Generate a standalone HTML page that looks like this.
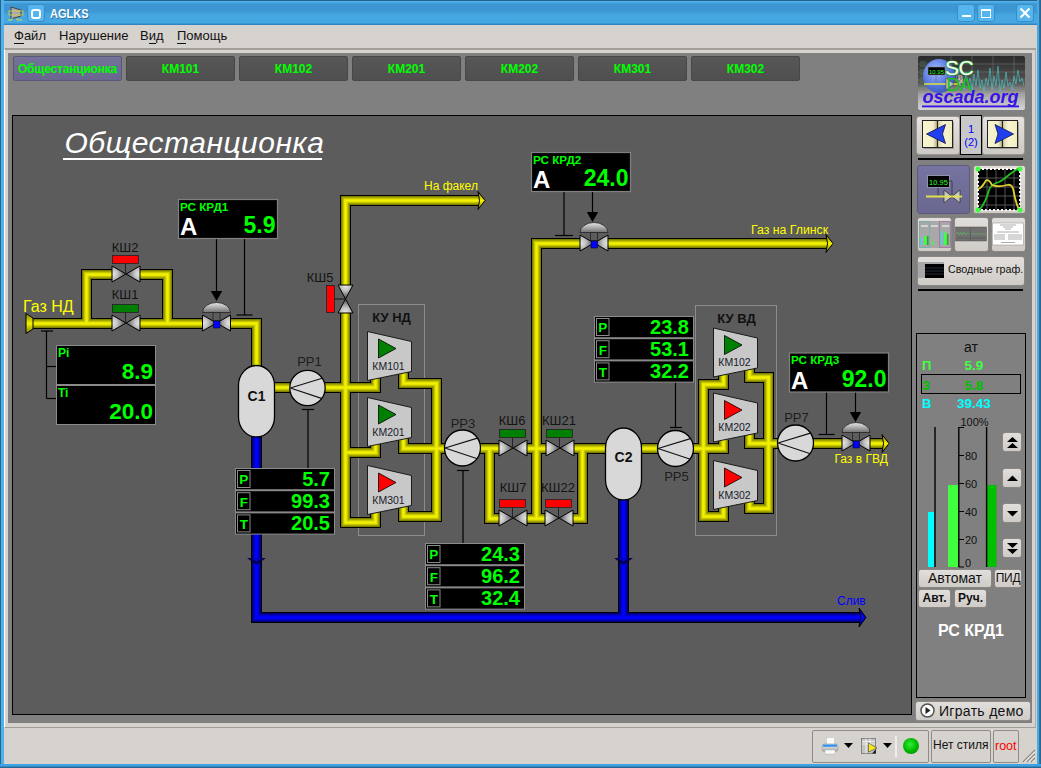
<!DOCTYPE html>
<html><head><meta charset="utf-8">
<style>
*{box-sizing:border-box}
html,body{margin:0;padding:0}
body{width:1041px;height:768px;position:relative;overflow:hidden;background:#d6d2ce;font-family:"Liberation Sans",sans-serif}
.a{position:absolute}
#tb{left:0;top:0;width:1041px;height:25px;background:linear-gradient(#24628c 0,#24628c 1px,#56b6ee 1px,#4eaee8 2px,#3e96d2 4px,#3d96d3 11px,#45a6e0 15px,#46a8e2 23px,#2f86c4 24px,#2f86c4 25px)}
#lb{left:0;top:0;width:4px;height:768px;background:#50b0ea;border-left:1px solid #24648e}
#rb{left:1037px;top:0px;width:4px;height:768px;background:linear-gradient(to right,#4aa8e4 0,#4aa8e4 2px,#2e72a0 2.5px,#22628c 4px)}
#bb{left:0;top:764px;width:1041px;height:4px;background:linear-gradient(#3ca4e4 0,#3ca4e4 2px,#2a6e9c 3px,#22628c 4px)}
.tbtn{top:4px;width:18px;height:18px;border:1px solid #3a8cc4;border-radius:3px;background:#55b5ee}
#menu{left:4px;top:25px;width:1033px;height:24px;background:#d6d2ce}
.mi{top:28px;font-size:13px;color:#111;line-height:15px}
.mi u{text-decoration:none;border-bottom:1px solid #111}
#ws{left:8px;top:53px;width:1024px;height:670px;background:#808080}
#frame{left:4px;top:48px;width:1032px;height:680px;border-top:2px solid #a29e9a;border-left:1px solid #fff;border-bottom:1px solid #a09c98;border-right:1px solid #b0aca8}
.tab{top:56px;width:109px;height:25px;border:1px solid #474747;border-radius:2px;background:linear-gradient(#575757,#4f4f4f);color:#00ff00;font-weight:bold;font-size:12px;text-align:center;line-height:24px}
#main{left:12px;top:115px;width:900px;height:600px;background:#5c5c5c;border:1px solid #000}
.sb{top:730px;height:33px;border:1px solid #8e8a86;border-radius:2px;background:#d6d2ce}
.btn{border:1px solid #8a8682;border-radius:3px;background:linear-gradient(#e2dedb,#cfcbc7)}
</style></head><body>
<div class="a" id="tb"></div>
<div class="a" id="lb"></div>
<div class="a" id="rb"></div>
<div class="a" id="bb"></div>
<!-- title bar contents -->
<svg class="a" style="left:8px;top:6px" width="16" height="15" viewBox="0 0 16 15">
 <polygon points="3,1 13,4 13,10 3,13" fill="#a8a8b0" stroke="#444" stroke-width="1"/>
 <rect x="1" y="5" width="14" height="4" fill="none" stroke="#d8d830" stroke-width="0.8"/>
 <path d="M0,14 H4 V12 M9,12 V14 H14" fill="none" stroke="#c8e040" stroke-width="1"/>
</svg>
<div class="a tbtn" style="left:27px"></div>
<div class="a" style="left:31px;top:9px;width:10px;height:10px;border:2.5px solid #fff;border-radius:3px"></div>
<div class="a" style="left:50px;top:6px;font-size:13px;font-weight:bold;color:#fff;line-height:15px;text-shadow:1px 1px 0 #2a70a0;transform:scaleX(0.85);transform-origin:0 0">AGLKS</div>
<div class="a tbtn" style="left:957px"></div>
<div class="a" style="left:962px;top:15px;width:9px;height:2px;background:#fff"></div>
<div class="a tbtn" style="left:977px"></div>
<div class="a" style="left:981px;top:9px;width:10px;height:9px;border:1.5px solid #fff;border-top-width:2.5px"></div>
<div class="a tbtn" style="left:1016px"></div>
<svg class="a" style="left:1016px;top:4px" width="18" height="18"><path d="M4.5,4.5 L13.5,13.5 M13.5,4.5 L4.5,13.5" stroke="#fff" stroke-width="2.2"/></svg>

<div class="a" id="menu"></div>
<div class="a mi" style="left:14px"><u>Ф</u>айл</div>
<div class="a mi" style="left:59px">Н<u>а</u>рушение</div>
<div class="a mi" style="left:140px">В<u>и</u>д</div>
<div class="a mi" style="left:177px"><u>П</u>омощь</div>

<div class="a" id="frame"></div>
<div class="a" id="ws"></div>

<div class="a tab" style="left:13px;background:linear-gradient(#74729a,#69678e);border-color:#5a5878;letter-spacing:-0.2px">Общестанционка</div>
<div class="a tab" style="left:126px">КМ101</div>
<div class="a tab" style="left:239px">КМ102</div>
<div class="a tab" style="left:352px">КМ201</div>
<div class="a tab" style="left:465px">КМ202</div>
<div class="a tab" style="left:578px">КМ301</div>
<div class="a tab" style="left:691px">КМ302</div>

<div class="a" id="main"></div>

<svg class="a" style="left:0;top:0" width="1041" height="768" viewBox="0 0 1041 768" font-family='"Liberation Sans",sans-serif'>
<defs>
<linearGradient id="gv" x1="0" y1="0" x2="0" y2="1"><stop offset="0" stop-color="#484848"/><stop offset="0.5" stop-color="#f0f0f0"/><stop offset="1" stop-color="#484848"/></linearGradient>
<linearGradient id="gh" x1="0" y1="0" x2="1" y2="0"><stop offset="0" stop-color="#484848"/><stop offset="0.5" stop-color="#f0f0f0"/><stop offset="1" stop-color="#484848"/></linearGradient>
<radialGradient id="gvl" cx="0.1" cy="0.5" r="0.95" fx="0.1" fy="0.5"><stop offset="0" stop-color="#e4e4e4"/><stop offset="0.3" stop-color="#c4c4c4"/><stop offset="0.7" stop-color="#787878"/><stop offset="1" stop-color="#505050"/></radialGradient>
<radialGradient id="gvr" cx="0.9" cy="0.5" r="0.95" fx="0.9" fy="0.5"><stop offset="0" stop-color="#e4e4e4"/><stop offset="0.3" stop-color="#c4c4c4"/><stop offset="0.7" stop-color="#787878"/><stop offset="1" stop-color="#505050"/></radialGradient>
<radialGradient id="gvt" cx="0.5" cy="0.1" r="0.95" fx="0.5" fy="0.1"><stop offset="0" stop-color="#e4e4e4"/><stop offset="0.3" stop-color="#c4c4c4"/><stop offset="0.7" stop-color="#787878"/><stop offset="1" stop-color="#505050"/></radialGradient>
<radialGradient id="gvb" cx="0.5" cy="0.9" r="0.95" fx="0.5" fy="0.9"><stop offset="0" stop-color="#e4e4e4"/><stop offset="0.3" stop-color="#c4c4c4"/><stop offset="0.7" stop-color="#787878"/><stop offset="1" stop-color="#505050"/></radialGradient>
<linearGradient id="gd" x1="0" y1="0" x2="0" y2="1"><stop offset="0" stop-color="#e8e8e8"/><stop offset="1" stop-color="#707070"/></linearGradient>
<linearGradient id="gy" x1="0" y1="0" x2="0" y2="1"><stop offset="0" stop-color="#808000"/><stop offset="0.5" stop-color="#f4f400"/><stop offset="1" stop-color="#808000"/></linearGradient>
<linearGradient id="gb" x1="0" y1="0" x2="0" y2="1"><stop offset="0" stop-color="#000080"/><stop offset="0.5" stop-color="#0000ff"/><stop offset="1" stop-color="#000080"/></linearGradient>
</defs>
<text x="64.5" y="153" font-size="30" font-style="italic" fill="#fff" letter-spacing="0.5">Общестанционка</text>
<rect x="63" y="158" width="259" height="2" fill="#fff"/>
<rect x="358.5" y="304.5" width="66" height="231" fill="none" stroke="#8c8c8c" stroke-width="1"/>
<rect x="695.5" y="305.5" width="81" height="230" fill="none" stroke="#8c8c8c" stroke-width="1"/>
<text x="391.5" y="322" font-size="13" font-weight="bold" fill="#111" text-anchor="middle">КУ НД</text>
<text x="736.5" y="323" font-size="13" font-weight="bold" fill="#111" text-anchor="middle">КУ ВД</text>
<path d="M30 323.5 H256.5 V367 M86.5 323.5 V274.5 H167.5 V323.5 M273 387.5 H375.5 V378 M479 200.5 H345.5 V522.5 H375.5 V511 M345.5 452.5 H375.5 V444 M403.5 370 V383.5 H436.5 V516.5 H403.5 V504 M403.5 435 V448.5 H436.5 M436.5 448.5 H607 M489.5 448.5 V518.5 H582.5 V448.5 M827 243.5 H536.5 V518.5 M640 448.5 H723.5 V440 M723.5 375 V384.5 H703.5 V516.5 H723.5 V507 M749.5 366 V377.5 H768.5 V508.5 H749.5 V499 M749.5 432 V443.5 H768.5 M768.5 443.5 H883" fill="none" stroke="#000" stroke-width="11" stroke-linejoin="miter" stroke-miterlimit="4"/>
<path d="M30 323.5 H256.5 V367 M86.5 323.5 V274.5 H167.5 V323.5 M273 387.5 H375.5 V378 M479 200.5 H345.5 V522.5 H375.5 V511 M345.5 452.5 H375.5 V444 M403.5 370 V383.5 H436.5 V516.5 H403.5 V504 M403.5 435 V448.5 H436.5 M436.5 448.5 H607 M489.5 448.5 V518.5 H582.5 V448.5 M827 243.5 H536.5 V518.5 M640 448.5 H723.5 V440 M723.5 375 V384.5 H703.5 V516.5 H723.5 V507 M749.5 366 V377.5 H768.5 V508.5 H749.5 V499 M749.5 432 V443.5 H768.5 M768.5 443.5 H883" fill="none" stroke="#787800" stroke-width="9" stroke-linejoin="miter" stroke-miterlimit="4"/>
<path d="M30 323.5 H256.5 V367 M86.5 323.5 V274.5 H167.5 V323.5 M273 387.5 H375.5 V378 M479 200.5 H345.5 V522.5 H375.5 V511 M345.5 452.5 H375.5 V444 M403.5 370 V383.5 H436.5 V516.5 H403.5 V504 M403.5 435 V448.5 H436.5 M436.5 448.5 H607 M489.5 448.5 V518.5 H582.5 V448.5 M827 243.5 H536.5 V518.5 M640 448.5 H723.5 V440 M723.5 375 V384.5 H703.5 V516.5 H723.5 V507 M749.5 366 V377.5 H768.5 V508.5 H749.5 V499 M749.5 432 V443.5 H768.5 M768.5 443.5 H883" fill="none" stroke="#949400" stroke-width="7.5" stroke-linejoin="miter" stroke-miterlimit="4"/>
<path d="M30 323.5 H256.5 V367 M86.5 323.5 V274.5 H167.5 V323.5 M273 387.5 H375.5 V378 M479 200.5 H345.5 V522.5 H375.5 V511 M345.5 452.5 H375.5 V444 M403.5 370 V383.5 H436.5 V516.5 H403.5 V504 M403.5 435 V448.5 H436.5 M436.5 448.5 H607 M489.5 448.5 V518.5 H582.5 V448.5 M827 243.5 H536.5 V518.5 M640 448.5 H723.5 V440 M723.5 375 V384.5 H703.5 V516.5 H723.5 V507 M749.5 366 V377.5 H768.5 V508.5 H749.5 V499 M749.5 432 V443.5 H768.5 M768.5 443.5 H883" fill="none" stroke="#b0b000" stroke-width="6" stroke-linejoin="miter" stroke-miterlimit="4"/>
<path d="M30 323.5 H256.5 V367 M86.5 323.5 V274.5 H167.5 V323.5 M273 387.5 H375.5 V378 M479 200.5 H345.5 V522.5 H375.5 V511 M345.5 452.5 H375.5 V444 M403.5 370 V383.5 H436.5 V516.5 H403.5 V504 M403.5 435 V448.5 H436.5 M436.5 448.5 H607 M489.5 448.5 V518.5 H582.5 V448.5 M827 243.5 H536.5 V518.5 M640 448.5 H723.5 V440 M723.5 375 V384.5 H703.5 V516.5 H723.5 V507 M749.5 366 V377.5 H768.5 V508.5 H749.5 V499 M749.5 432 V443.5 H768.5 M768.5 443.5 H883" fill="none" stroke="#cccc00" stroke-width="4.5" stroke-linejoin="miter" stroke-miterlimit="4"/>
<path d="M30 323.5 H256.5 V367 M86.5 323.5 V274.5 H167.5 V323.5 M273 387.5 H375.5 V378 M479 200.5 H345.5 V522.5 H375.5 V511 M345.5 452.5 H375.5 V444 M403.5 370 V383.5 H436.5 V516.5 H403.5 V504 M403.5 435 V448.5 H436.5 M436.5 448.5 H607 M489.5 448.5 V518.5 H582.5 V448.5 M827 243.5 H536.5 V518.5 M640 448.5 H723.5 V440 M723.5 375 V384.5 H703.5 V516.5 H723.5 V507 M749.5 366 V377.5 H768.5 V508.5 H749.5 V499 M749.5 432 V443.5 H768.5 M768.5 443.5 H883" fill="none" stroke="#e2e200" stroke-width="3" stroke-linejoin="miter" stroke-miterlimit="4"/>
<path d="M30 323.5 H256.5 V367 M86.5 323.5 V274.5 H167.5 V323.5 M273 387.5 H375.5 V378 M479 200.5 H345.5 V522.5 H375.5 V511 M345.5 452.5 H375.5 V444 M403.5 370 V383.5 H436.5 V516.5 H403.5 V504 M403.5 435 V448.5 H436.5 M436.5 448.5 H607 M489.5 448.5 V518.5 H582.5 V448.5 M827 243.5 H536.5 V518.5 M640 448.5 H723.5 V440 M723.5 375 V384.5 H703.5 V516.5 H723.5 V507 M749.5 366 V377.5 H768.5 V508.5 H749.5 V499 M749.5 432 V443.5 H768.5 M768.5 443.5 H883" fill="none" stroke="#f2f200" stroke-width="1.5" stroke-linejoin="miter" stroke-miterlimit="4"/>
<path d="M256.5 436 V617.5 H860 M623.5 499 V617.5" fill="none" stroke="#000" stroke-width="11" stroke-linejoin="miter" stroke-miterlimit="4"/>
<path d="M256.5 436 V617.5 H860 M623.5 499 V617.5" fill="none" stroke="#000070" stroke-width="9" stroke-linejoin="miter" stroke-miterlimit="4"/>
<path d="M256.5 436 V617.5 H860 M623.5 499 V617.5" fill="none" stroke="#000098" stroke-width="7.5" stroke-linejoin="miter" stroke-miterlimit="4"/>
<path d="M256.5 436 V617.5 H860 M623.5 499 V617.5" fill="none" stroke="#0000b8" stroke-width="6" stroke-linejoin="miter" stroke-miterlimit="4"/>
<path d="M256.5 436 V617.5 H860 M623.5 499 V617.5" fill="none" stroke="#0000d4" stroke-width="4.5" stroke-linejoin="miter" stroke-miterlimit="4"/>
<path d="M256.5 436 V617.5 H860 M623.5 499 V617.5" fill="none" stroke="#0000ee" stroke-width="3" stroke-linejoin="miter" stroke-miterlimit="4"/>
<path d="M256.5 436 V617.5 H860 M623.5 499 V617.5" fill="none" stroke="#0000ff" stroke-width="1.5" stroke-linejoin="miter" stroke-miterlimit="4"/>
<polygon points="478,191.5 485,200.5 478,209.5 479.5,200.5" fill="url(#gy)" stroke="#000" stroke-width="1"/>
<polygon points="826,234.5 833,243.5 826,252.5 827.5,243.5" fill="url(#gy)" stroke="#000" stroke-width="1"/>
<polygon points="882,434.5 889,443.5 882,452.5 883.5,443.5" fill="url(#gy)" stroke="#000" stroke-width="1"/>
<polygon points="859,608.0 866,617.5 859,627.0 860.5,617.5" fill="url(#gb)" stroke="#000" stroke-width="1"/>
<polygon points="26,313.5 33,318 33,329 26,333.5" fill="url(#gy)" stroke="#000" stroke-width="1"/>
<path d="M247.0,558 L266.0,558 L256.5,565 Z" fill="#000040" opacity="0.9"/>
<path d="M251.5,558 L261.5,558 L256.5,562 Z" fill="#0000cc"/>
<path d="M614.0,558 L633.0,558 L623.5,565 Z" fill="#000040" opacity="0.9"/>
<path d="M618.5,558 L628.5,558 L623.5,562 Z" fill="#0000cc"/>
<rect x="238.5" y="365.5" width="36.0" height="71.5" rx="18.0" ry="20.0" fill="#d8d8d8" stroke="#000" stroke-width="1.3"/>
<text x="256.5" y="400.5" font-size="14" font-weight="bold" fill="#111" text-anchor="middle">С1</text>
<rect x="605.5" y="428" width="36.0" height="72" rx="18.0" ry="20.0" fill="#d8d8d8" stroke="#000" stroke-width="1.3"/>
<text x="623.5" y="461.5" font-size="14" font-weight="bold" fill="#111" text-anchor="middle">С2</text>
<circle cx="307.5" cy="388" r="17.7" fill="#d8d8d8" stroke="#000" stroke-width="1.3"/>
<path d="M290.3,388 L322.191,378.265 M290.3,388 L322.191,398.62" stroke="#111" stroke-width="1.1"/>
<circle cx="462.5" cy="448" r="18" fill="#d8d8d8" stroke="#000" stroke-width="1.3"/>
<path d="M445.0,448 L477.44,438.1 M445.0,448 L477.44,458.8" stroke="#111" stroke-width="1.1"/>
<circle cx="675.5" cy="448.5" r="18" fill="#d8d8d8" stroke="#000" stroke-width="1.3"/>
<path d="M658.0,448.5 L690.44,438.6 M658.0,448.5 L690.44,459.3" stroke="#111" stroke-width="1.1"/>
<circle cx="795.5" cy="443" r="18" fill="#d8d8d8" stroke="#000" stroke-width="1.3"/>
<path d="M778.0,443 L810.44,433.1 M778.0,443 L810.44,453.8" stroke="#111" stroke-width="1.1"/>
<polygon points="367.5,331.5 411.5,341.5 411.5,371.5 367.5,380.5" fill="#c8c8c8" stroke="#1a1a1a" stroke-width="1"/>
<polygon points="378.5,339.0 396.0,348.5 378.5,358.0" fill="#008000" stroke="#000" stroke-width="0.8"/>
<text x="388.5" y="369.8" font-size="10.5" fill="#1a1a2a" text-anchor="middle">КМ101</text>
<polygon points="367.5,397.5 411.5,407.5 411.5,437.5 367.5,446.5" fill="#c8c8c8" stroke="#1a1a1a" stroke-width="1"/>
<polygon points="378.5,405.0 396.0,414.5 378.5,424.0" fill="#008000" stroke="#000" stroke-width="0.8"/>
<text x="388.5" y="435.8" font-size="10.5" fill="#1a1a2a" text-anchor="middle">КМ201</text>
<polygon points="367.5,465.5 411.5,475.5 411.5,505.5 367.5,514.5" fill="#c8c8c8" stroke="#1a1a1a" stroke-width="1"/>
<polygon points="378.5,473.0 396.0,482.5 378.5,492.0" fill="#ff0000" stroke="#000" stroke-width="0.8"/>
<text x="388.5" y="503.8" font-size="10.5" fill="#1a1a2a" text-anchor="middle">КМ301</text>
<polygon points="713.5,328 757.5,338 757.5,368 713.5,377" fill="#c8c8c8" stroke="#1a1a1a" stroke-width="1"/>
<polygon points="724.5,335.5 742.0,345 724.5,354.5" fill="#008000" stroke="#000" stroke-width="0.8"/>
<text x="734.5" y="366.3" font-size="10.5" fill="#1a1a2a" text-anchor="middle">КМ102</text>
<polygon points="713.5,393 757.5,403 757.5,433 713.5,442" fill="#c8c8c8" stroke="#1a1a1a" stroke-width="1"/>
<polygon points="724.5,400.5 742.0,410 724.5,419.5" fill="#ff0000" stroke="#000" stroke-width="0.8"/>
<text x="734.5" y="431.3" font-size="10.5" fill="#1a1a2a" text-anchor="middle">КМ202</text>
<polygon points="713.5,460.5 757.5,470.5 757.5,500.5 713.5,509.5" fill="#c8c8c8" stroke="#1a1a1a" stroke-width="1"/>
<polygon points="724.5,468.0 742.0,477.5 724.5,487.0" fill="#ff0000" stroke="#000" stroke-width="0.8"/>
<text x="734.5" y="498.8" font-size="10.5" fill="#1a1a2a" text-anchor="middle">КМ302</text>
<rect x="113" y="268" width="26" height="12" fill="#5c5c5c"/>
<polygon points="112,266 126,274 112,282" fill="url(#gvl)" stroke="#000" stroke-width="1"/>
<polygon points="140,266 126,274 140,282" fill="url(#gvr)" stroke="#000" stroke-width="1"/>
<line x1="125.5" y1="263.5" x2="125.5" y2="274" stroke="#222" stroke-width="1"/>
<rect x="112.5" y="255.5" width="26" height="8" fill="#ff0000" stroke="#222" stroke-width="0.8"/>
<text x="125" y="251.8" font-size="13" fill="#141414" text-anchor="middle">КШ2</text>
<rect x="113" y="317" width="26" height="12" fill="#5c5c5c"/>
<polygon points="112,315 126,323 112,331" fill="url(#gvl)" stroke="#000" stroke-width="1"/>
<polygon points="140,315 126,323 140,331" fill="url(#gvr)" stroke="#000" stroke-width="1"/>
<line x1="125.5" y1="312.5" x2="125.5" y2="323" stroke="#222" stroke-width="1"/>
<rect x="112.5" y="304.5" width="26" height="8" fill="#008000" stroke="#222" stroke-width="0.8"/>
<text x="125" y="299.3" font-size="13" fill="#141414" text-anchor="middle">КШ1</text>
<rect x="500" y="442" width="26" height="12" fill="#5c5c5c"/>
<polygon points="499,440 513,448 499,456" fill="url(#gvl)" stroke="#000" stroke-width="1"/>
<polygon points="527,440 513,448 527,456" fill="url(#gvr)" stroke="#000" stroke-width="1"/>
<line x1="512.5" y1="437.5" x2="512.5" y2="448" stroke="#222" stroke-width="1"/>
<rect x="499.5" y="429.5" width="26" height="8" fill="#008000" stroke="#222" stroke-width="0.8"/>
<text x="512" y="424.8" font-size="13" fill="#141414" text-anchor="middle">КШ6</text>
<rect x="547" y="442" width="26" height="12" fill="#5c5c5c"/>
<polygon points="546,440 560,448 546,456" fill="url(#gvl)" stroke="#000" stroke-width="1"/>
<polygon points="574,440 560,448 574,456" fill="url(#gvr)" stroke="#000" stroke-width="1"/>
<line x1="559.5" y1="437.5" x2="559.5" y2="448" stroke="#222" stroke-width="1"/>
<rect x="546.5" y="429.5" width="26" height="8" fill="#008000" stroke="#222" stroke-width="0.8"/>
<text x="559" y="424.8" font-size="13" fill="#141414" text-anchor="middle">КШ21</text>
<rect x="500" y="512" width="26" height="12" fill="#5c5c5c"/>
<polygon points="499,510 513,518 499,526" fill="url(#gvl)" stroke="#000" stroke-width="1"/>
<polygon points="527,510 513,518 527,526" fill="url(#gvr)" stroke="#000" stroke-width="1"/>
<line x1="512.5" y1="507.5" x2="512.5" y2="518" stroke="#222" stroke-width="1"/>
<rect x="499.5" y="499.5" width="26" height="8" fill="#ff0000" stroke="#222" stroke-width="0.8"/>
<text x="513" y="492.40000000000003" font-size="13" fill="#141414" text-anchor="middle">КШ7</text>
<rect x="546" y="512" width="26" height="12" fill="#5c5c5c"/>
<polygon points="545,510 559,518 545,526" fill="url(#gvl)" stroke="#000" stroke-width="1"/>
<polygon points="573,510 559,518 573,526" fill="url(#gvr)" stroke="#000" stroke-width="1"/>
<line x1="558.5" y1="507.5" x2="558.5" y2="518" stroke="#222" stroke-width="1"/>
<rect x="545.5" y="499.5" width="26" height="8" fill="#ff0000" stroke="#222" stroke-width="0.8"/>
<text x="558" y="492.40000000000003" font-size="13" fill="#141414" text-anchor="middle">КШ22</text>
<rect x="339.5" y="286" width="12" height="26" fill="#5c5c5c"/>
<polygon points="338.0,285 345.5,299 353.0,285" fill="url(#gvt)" stroke="#000" stroke-width="1"/>
<polygon points="338.0,313 345.5,299 353.0,313" fill="url(#gvb)" stroke="#000" stroke-width="1"/>
<line x1="334" y1="299" x2="345.5" y2="299" stroke="#111" stroke-width="1"/>
<rect x="326.5" y="285.5" width="8" height="27" fill="#ff0000" stroke="#222" stroke-width="0.8"/>
<text x="320" y="282" font-size="13" fill="#141414" text-anchor="middle">КШ5</text>
<rect x="203.5" y="317" width="26" height="12" fill="#5c5c5c"/>
<polygon points="202.5,315 216.5,323 202.5,331" fill="url(#gvl)" stroke="#000" stroke-width="1"/>
<polygon points="230.5,315 216.5,323 230.5,331" fill="url(#gvr)" stroke="#000" stroke-width="1"/>
<rect x="213.0" y="312.5" width="7" height="8" fill="none" stroke="#222" stroke-width="0.8"/>
<path d="M202.5,312.5 A14,10 0 0 1 230.5,312.5 Z" fill="url(#gd)" stroke="#222" stroke-width="0.8"/>
<rect x="213.5" y="321" width="6.5" height="7" fill="#0000ff" stroke="#000" stroke-width="0.5"/>
<rect x="581" y="237" width="26" height="12" fill="#5c5c5c"/>
<polygon points="580,235 594,243 580,251" fill="url(#gvl)" stroke="#000" stroke-width="1"/>
<polygon points="608,235 594,243 608,251" fill="url(#gvr)" stroke="#000" stroke-width="1"/>
<rect x="590.5" y="232.5" width="7" height="8" fill="none" stroke="#222" stroke-width="0.8"/>
<path d="M580,232.5 A14,10 0 0 1 608,232.5 Z" fill="url(#gd)" stroke="#222" stroke-width="0.8"/>
<rect x="591" y="241" width="6.5" height="7" fill="#0000ff" stroke="#000" stroke-width="0.5"/>
<rect x="843" y="437" width="26" height="12" fill="#5c5c5c"/>
<polygon points="842,435 856,443 842,451" fill="url(#gvl)" stroke="#000" stroke-width="1"/>
<polygon points="870,435 856,443 870,451" fill="url(#gvr)" stroke="#000" stroke-width="1"/>
<rect x="852.5" y="432.5" width="7" height="8" fill="none" stroke="#222" stroke-width="0.8"/>
<path d="M842,432.5 A14,10 0 0 1 870,432.5 Z" fill="url(#gd)" stroke="#222" stroke-width="0.8"/>
<rect x="853" y="441" width="6.5" height="7" fill="#0000ff" stroke="#000" stroke-width="0.5"/>
<text x="309.5" y="366.3" font-size="13" fill="#1e1e1e" text-anchor="middle">РР1</text>
<text x="463" y="427.6" font-size="13" fill="#1e1e1e" text-anchor="middle">РР3</text>
<text x="676.5" y="480.8" font-size="13" fill="#1e1e1e" text-anchor="middle">РР5</text>
<text x="796.5" y="422.3" font-size="13" fill="#1e1e1e" text-anchor="middle">РР7</text>
<text x="23" y="312" font-size="16" fill="#ffff00">Газ НД</text>
<text x="424" y="189.5" font-size="12" fill="#ffff00">На факел</text>
<text x="751" y="233.5" font-size="12.3" fill="#ffff00">Газ на Глинск</text>
<text x="834.5" y="462.5" font-size="12" fill="#ffff00">Газ в ГВД</text>
<text x="837" y="605" font-size="12" fill="#0000ff">Слив</text>
<line x1="216.5" y1="238.5" x2="216.5" y2="291" stroke="#000" stroke-width="1.2"/>
<polygon points="210.8,291 222.2,291 216.5,301" fill="#000"/>
<line x1="244.5" y1="238.5" x2="244.5" y2="315" stroke="#000" stroke-width="1.2"/>
<line x1="236.5" y1="315" x2="252.5" y2="315" stroke="#000" stroke-width="1.2"/>
<line x1="592.5" y1="191.5" x2="592.5" y2="212" stroke="#000" stroke-width="1.2"/>
<polygon points="586.8,212 598.2,212 592.5,222" fill="#000"/>
<line x1="564" y1="191.5" x2="564" y2="235.5" stroke="#000" stroke-width="1.2"/>
<line x1="555" y1="235.5" x2="573" y2="235.5" stroke="#000" stroke-width="1.2"/>
<line x1="855.5" y1="391.5" x2="855.5" y2="412" stroke="#000" stroke-width="1.2"/>
<polygon points="849.8,412 861.2,412 855.5,422" fill="#000"/>
<line x1="826.5" y1="391.5" x2="826.5" y2="434.5" stroke="#000" stroke-width="1.2"/>
<line x1="818.5" y1="434.5" x2="834.5" y2="434.5" stroke="#000" stroke-width="1.2"/>
<line x1="46.5" y1="331" x2="46.5" y2="398.5" stroke="#000" stroke-width="1.2"/>
<line x1="41" y1="331" x2="53" y2="331" stroke="#000" stroke-width="1.2"/>
<line x1="46.5" y1="366.5" x2="56" y2="366.5" stroke="#000" stroke-width="1.2"/>
<line x1="46.5" y1="398.5" x2="56" y2="398.5" stroke="#000" stroke-width="1.2"/>
<line x1="302" y1="409.5" x2="314" y2="409.5" stroke="#000" stroke-width="1.2"/>
<line x1="308" y1="409.5" x2="308" y2="468" stroke="#000" stroke-width="1.2"/>
<line x1="457" y1="470.5" x2="469" y2="470.5" stroke="#000" stroke-width="1.2"/>
<line x1="463" y1="470.5" x2="463" y2="543" stroke="#000" stroke-width="1.2"/>
<line x1="670" y1="427.5" x2="682" y2="427.5" stroke="#000" stroke-width="1.2"/>
<line x1="675.5" y1="382.5" x2="675.5" y2="427.5" stroke="#000" stroke-width="1.2"/>
<rect x="178.5" y="199.5" width="99" height="39" fill="#000" stroke="#808080" stroke-width="1.2"/>
<text x="180" y="210.6" font-size="11.7" font-weight="bold" fill="#00ff00">РС КРД1</text>
<text x="180" y="235.4" font-size="24" font-weight="bold" fill="#fff">А</text>
<text x="275.5" y="233" font-size="23" font-weight="bold" fill="#00ff00" text-anchor="end">5.9</text>
<rect x="531.5" y="152.5" width="99" height="39" fill="#000" stroke="#808080" stroke-width="1.2"/>
<text x="533" y="163.6" font-size="11.7" font-weight="bold" fill="#00ff00">РС КРД2</text>
<text x="533" y="188.4" font-size="24" font-weight="bold" fill="#fff">А</text>
<text x="628.5" y="186" font-size="23" font-weight="bold" fill="#00ff00" text-anchor="end">24.0</text>
<rect x="789.5" y="353.0" width="99" height="39" fill="#000" stroke="#808080" stroke-width="1.2"/>
<text x="791" y="364.1" font-size="11.7" font-weight="bold" fill="#00ff00">РС КРД3</text>
<text x="791" y="388.9" font-size="24" font-weight="bold" fill="#fff">А</text>
<text x="886.5" y="386.5" font-size="23" font-weight="bold" fill="#00ff00" text-anchor="end">92.0</text>
<rect x="56.5" y="345.5" width="99" height="39" fill="#000" stroke="#8a8a8a" stroke-width="1"/>
<text x="58" y="356.5" font-size="12" font-weight="bold" fill="#00ff00">Pi</text>
<text x="153" y="379" font-size="22.5" font-weight="bold" fill="#00ff00" text-anchor="end">8.9</text>
<rect x="56.5" y="385.5" width="99" height="39" fill="#000" stroke="#8a8a8a" stroke-width="1"/>
<text x="58" y="396.5" font-size="12" font-weight="bold" fill="#00ff00">Ti</text>
<text x="153" y="419" font-size="22.5" font-weight="bold" fill="#00ff00" text-anchor="end">20.0</text>
<rect x="235" y="468" width="100" height="66.6" fill="#8a8a8a"/>
<rect x="236" y="469.0" width="98" height="20.2" fill="#000"/>
<rect x="237.5" y="470.5" width="12.5" height="17" fill="none" stroke="#8a8a8a" stroke-width="1"/>
<text x="243.8" y="484.3" font-size="13.5" font-weight="bold" fill="#00ff00" text-anchor="middle">P</text>
<text x="330" y="486.0" font-size="20" font-weight="bold" fill="#00ff00" text-anchor="end">5.7</text>
<rect x="236" y="491.2" width="98" height="20.2" fill="#000"/>
<rect x="237.5" y="492.7" width="12.5" height="17" fill="none" stroke="#8a8a8a" stroke-width="1"/>
<text x="243.8" y="506.5" font-size="13.5" font-weight="bold" fill="#00ff00" text-anchor="middle">F</text>
<text x="330" y="508.2" font-size="20" font-weight="bold" fill="#00ff00" text-anchor="end">99.3</text>
<rect x="236" y="513.4" width="98" height="20.2" fill="#000"/>
<rect x="237.5" y="514.9" width="12.5" height="17" fill="none" stroke="#8a8a8a" stroke-width="1"/>
<text x="243.8" y="528.6999999999999" font-size="13.5" font-weight="bold" fill="#00ff00" text-anchor="middle">T</text>
<text x="330" y="530.4" font-size="20" font-weight="bold" fill="#00ff00" text-anchor="end">20.5</text>
<rect x="425" y="543" width="100" height="66.6" fill="#8a8a8a"/>
<rect x="426" y="544.0" width="98" height="20.2" fill="#000"/>
<rect x="427.5" y="545.5" width="12.5" height="17" fill="none" stroke="#8a8a8a" stroke-width="1"/>
<text x="433.8" y="559.3" font-size="13.5" font-weight="bold" fill="#00ff00" text-anchor="middle">P</text>
<text x="520" y="561.0" font-size="20" font-weight="bold" fill="#00ff00" text-anchor="end">24.3</text>
<rect x="426" y="566.2" width="98" height="20.2" fill="#000"/>
<rect x="427.5" y="567.7" width="12.5" height="17" fill="none" stroke="#8a8a8a" stroke-width="1"/>
<text x="433.8" y="581.5" font-size="13.5" font-weight="bold" fill="#00ff00" text-anchor="middle">F</text>
<text x="520" y="583.2" font-size="20" font-weight="bold" fill="#00ff00" text-anchor="end">96.2</text>
<rect x="426" y="588.4" width="98" height="20.2" fill="#000"/>
<rect x="427.5" y="589.9" width="12.5" height="17" fill="none" stroke="#8a8a8a" stroke-width="1"/>
<text x="433.8" y="603.6999999999999" font-size="13.5" font-weight="bold" fill="#00ff00" text-anchor="middle">T</text>
<text x="520" y="605.4" font-size="20" font-weight="bold" fill="#00ff00" text-anchor="end">32.4</text>
<rect x="594" y="316" width="100" height="66.6" fill="#8a8a8a"/>
<rect x="595" y="317.0" width="98" height="20.2" fill="#000"/>
<rect x="596.5" y="318.5" width="12.5" height="17" fill="none" stroke="#8a8a8a" stroke-width="1"/>
<text x="602.8" y="332.3" font-size="13.5" font-weight="bold" fill="#00ff00" text-anchor="middle">P</text>
<text x="689" y="334.0" font-size="20" font-weight="bold" fill="#00ff00" text-anchor="end">23.8</text>
<rect x="595" y="339.2" width="98" height="20.2" fill="#000"/>
<rect x="596.5" y="340.7" width="12.5" height="17" fill="none" stroke="#8a8a8a" stroke-width="1"/>
<text x="602.8" y="354.5" font-size="13.5" font-weight="bold" fill="#00ff00" text-anchor="middle">F</text>
<text x="689" y="356.2" font-size="20" font-weight="bold" fill="#00ff00" text-anchor="end">53.1</text>
<rect x="595" y="361.4" width="98" height="20.2" fill="#000"/>
<rect x="596.5" y="362.9" width="12.5" height="17" fill="none" stroke="#8a8a8a" stroke-width="1"/>
<text x="602.8" y="376.7" font-size="13.5" font-weight="bold" fill="#00ff00" text-anchor="middle">T</text>
<text x="689" y="378.4" font-size="20" font-weight="bold" fill="#00ff00" text-anchor="end">32.2</text>
</svg>

<!-- status bar -->
<div class="a sb" style="left:812px;width:117px"></div>
<div class="a sb" style="left:931px;width:60px"></div>
<div class="a sb" style="left:993px;width:26px"></div>
<div class="a" style="left:933px;top:738px;font-size:12px;color:#111;line-height:15px">Нет стиля</div>
<div class="a" style="left:995px;top:739px;font-size:12.5px;color:#ff0000;line-height:15px">root</div>
<div class="a" style="left:903px;top:738px;width:16px;height:16px;border-radius:50%;background:radial-gradient(circle at 45% 40%,#30f030,#00b400 55%,#008000)"></div>

<svg class="a" style="left:918px;top:56px" width="107" height="55" viewBox="0 0 107 55" font-family='"Liberation Sans",sans-serif'>
<defs>
<linearGradient id="lg1" x1="0" y1="0" x2="0" y2="1"><stop offset="0" stop-color="#2a2a2a"/><stop offset="0.5" stop-color="#555"/><stop offset="0.72" stop-color="#a8a8a8"/><stop offset="1" stop-color="#d4d4d4"/></linearGradient>
<radialGradient id="lg2" cx="0.4" cy="0.35" r="0.7"><stop offset="0" stop-color="#a8c0ff"/><stop offset="0.6" stop-color="#5878e0"/><stop offset="1" stop-color="#3858b8"/></radialGradient>
</defs>
<rect x="0" y="0" width="107" height="54" rx="2" fill="url(#lg1)"/>
<g stroke="#9a9a9a" stroke-width="0.5" opacity="0.7">
<path d="M0,8 H107 M0,16 H107 M0,24 H107 M0,32 H107 M0,40 H107 M33,0 V48 M54,0 V48 M75,0 V48 M96,0 V48"/>
</g>
<path d="M2,6 H8 M2,10 H8 M2,14 H8 M2,18 H8 M2,22 H8 M2,26 H8 M2,30 H8" stroke="#40a060" stroke-width="0.6"/>
<path d="M38,26 L40,12 L42,30 L44,20 L46,34 L48,16 L50,28 L52,22 L54,36 L56,18 L58,30 L60,14 L62,32 L64,24 L66,36 L68,22 L70,30 L72,12 L74,34 L76,20 L78,30 L80,10 L82,36 L84,24 L86,32 L88,16 L90,30 L92,26 L94,34 L96,20 L98,28 L100,14 L102,26 L104,22 L106,30" fill="none" stroke="#48c0c0" stroke-width="0.7"/>
<ellipse cx="21" cy="20" rx="16" ry="17" fill="url(#lg2)"/>
<rect x="10" y="11" width="17" height="8" fill="#000" stroke="#888" stroke-width="0.6"/>
<text x="18.5" y="17.5" font-size="6" fill="#30ff30" text-anchor="middle">10.95</text>
<path d="M18,19 V27 M27,15 H30 V27" stroke="#666" stroke-width="0.6" fill="none"/>
<path d="M6,28 H42" stroke="#e0e040" stroke-width="1.6"/>
<path d="M28,22 L36,28 L28,34 Z" fill="#c0c0c0" stroke="#333" stroke-width="0.5"/>
<text x="41" y="19" font-size="21" fill="#fff" stroke="#20b020" stroke-width="1.2" paint-order="stroke" text-anchor="middle" letter-spacing="-0.5">SC</text>
<text x="42" y="27" font-size="10" fill="#ffb8a8" text-anchor="middle">&amp;</text>
<text x="41" y="35" font-size="19" fill="#18c018" text-anchor="middle" letter-spacing="-0.5">DA</text>
<text x="52.5" y="46.5" font-size="18" font-weight="bold" font-style="italic" fill="#3a10e8" text-anchor="middle">oscada.org</text>
<rect x="4" y="49.5" width="97" height="1.8" fill="#3a10e8"/>
</svg>
<div class="a btn" style="left:916px;top:116px;width:44px;height:39px;border-color:#9a9692;background:linear-gradient(#e6e2df,#cdc9c5)"></div>
<div class="a btn" style="left:982px;top:116px;width:43px;height:39px;border-color:#9a9692;background:linear-gradient(#e6e2df,#cdc9c5)"></div>
<div class="a" style="left:960px;top:115px;width:22px;height:40px;border:1px solid #000;background:#c8c8c8;color:#0000ff;font-size:11px;line-height:13px;text-align:center;padding-top:7px">1<br>(2)</div>
<svg class="a" style="left:922px;top:120px" width="33" height="30" viewBox="0 0 33 30">
<defs><linearGradient id="bk922" x1="0" y1="0" x2="1" y2="0"><stop offset="0" stop-color="#f8f4d0"/><stop offset="0.35" stop-color="#f4f0c8"/><stop offset="0.48" stop-color="#b8b490"/><stop offset="0.52" stop-color="#d8d4b0"/><stop offset="0.7" stop-color="#f8f4d0"/><stop offset="1" stop-color="#f0ecc0"/></linearGradient></defs>
<rect x="2" y="2" width="30" height="27" fill="#6a6660" opacity="0.5"/>
<rect x="0.5" y="0.5" width="30" height="27" fill="url(#bk922)" stroke="#222" stroke-width="1"/>
<line x1="15.5" y1="0" x2="15.5" y2="28" stroke="#222" stroke-width="1.2"/>
<polygon points="4.5,14 23.5,4.5 20.5,14 23.5,23.5" fill="#2040f0" stroke="#101040" stroke-width="0.8"/>
</svg>
<svg class="a" style="left:987px;top:120px" width="33" height="30" viewBox="0 0 33 30">
<defs><linearGradient id="bk987" x1="0" y1="0" x2="1" y2="0"><stop offset="0" stop-color="#f8f4d0"/><stop offset="0.35" stop-color="#f4f0c8"/><stop offset="0.48" stop-color="#b8b490"/><stop offset="0.52" stop-color="#d8d4b0"/><stop offset="0.7" stop-color="#f8f4d0"/><stop offset="1" stop-color="#f0ecc0"/></linearGradient></defs>
<rect x="2" y="2" width="30" height="27" fill="#6a6660" opacity="0.5"/>
<rect x="0.5" y="0.5" width="30" height="27" fill="url(#bk987)" stroke="#222" stroke-width="1"/>
<line x1="15.5" y1="0" x2="15.5" y2="28" stroke="#222" stroke-width="1.2"/>
<polygon points="26.5,14 8,4.5 11,14 8,23.5" fill="#2040f0" stroke="#101040" stroke-width="0.8"/>
</svg>
<div class="a" style="left:918px;top:158px;width:105px;height:2px;background:#000"></div>
<div class="a" style="left:918px;top:289px;width:105px;height:2px;background:#000"></div>
<div class="a btn" style="left:917px;top:165px;width:53px;height:49px;background:linear-gradient(#7674a0,#6a6890);border-color:#5c5a7c"></div>
<svg class="a" style="left:917px;top:165px" width="53" height="49" viewBox="0 0 53 49">
<rect x="10.5" y="10.5" width="22" height="12" fill="#000" stroke="#9090a8" stroke-width="1"/>
<text x="21.5" y="20" font-size="7.5" fill="#30ff30" text-anchor="middle">10.95</text>
<path d="M21,23 V31.5 M17,31.5 H25 M32,16 H35 V33" stroke="#333" stroke-width="0.8" fill="none"/>
<path d="M27,25 L35,31.5 L27,38 Z M43,25 L35,31.5 L43,38 Z" fill="#c8c8c8" stroke="#333" stroke-width="0.8"/>
<path d="M9,31.5 H45" stroke="#e0e050" stroke-width="2.2"/>
</svg>
<div class="a btn" style="left:973px;top:165px;width:53px;height:49px"></div>
<svg class="a" style="left:973px;top:165px" width="53" height="49" viewBox="0 0 53 49">
<rect x="5" y="4" width="42" height="41" fill="#000" stroke="#fff" stroke-width="2" stroke-dasharray="2,2"/>
<path d="M5,13 H47 M5,22 H47 M5,31 H47 M5,40 H47 M14,4 V45 M23,4 V45 M32,4 V45 M41,4 V45" stroke="#555" stroke-width="1"/>
<path d="M7,44 C12,38 14,33 16,25 C18,20 22,18 26,17 C31,15 35,10 40,7 L46,3" fill="none" stroke="#20c020" stroke-width="1.8"/>
<path d="M5,24 C9,23 10,20 12,17 C14,13 17,16 19,20 C23,22 30,21 34,20 C38,19 40,21 41,28 C42,35 44,40 46,45" fill="none" stroke="#e0d030" stroke-width="1.8"/>
<circle cx="5" cy="4" r="2.5" fill="#40ff40"/><circle cx="47" cy="4" r="2.5" fill="#40ff40"/><circle cx="5" cy="45" r="2.5" fill="#40ff40"/><circle cx="47" cy="45" r="2.5" fill="#40ff40"/>
</svg>
<div class="a btn" style="left:917px;top:217px;width:35px;height:35px"></div>
<div class="a btn" style="left:954px;top:217px;width:35px;height:35px"></div>
<div class="a btn" style="left:991px;top:217px;width:35px;height:35px"></div>
<svg class="a" style="left:917px;top:217px" width="35" height="35" viewBox="0 0 35 35">
<rect x="2" y="4" width="32" height="27" fill="#a8a8a8"/>
<rect x="2.5" y="4.5" width="10" height="26" fill="none" stroke="#60b0b0" stroke-width="0.6"/>
<rect x="22.5" y="4.5" width="11" height="26" fill="none" stroke="#a060a0" stroke-width="0.6"/>
<rect x="4" y="21" width="1.5" height="7" fill="#30e0e0"/><rect x="7" y="19" width="2" height="9" fill="#40ff40"/><rect x="10" y="19" width="1.5" height="9" fill="#00c000"/>
<rect x="15" y="24" width="1.5" height="4" fill="#40ff40"/>
<rect x="24" y="14" width="1.5" height="14" fill="#30e0e0"/><rect x="27" y="15" width="2" height="13" fill="#40ff40"/><rect x="30" y="17" width="1.5" height="11" fill="#00c000"/>
<path d="M4,9 H11 M14,9 H21 M25,9 H32" stroke="#fff" stroke-width="1.2"/>
</svg>
<svg class="a" style="left:954px;top:217px" width="35" height="35" viewBox="0 0 35 35">
<rect x="1.5" y="10" width="31" height="14" fill="#707070" stroke="#505050" stroke-width="0.5"/>
<path d="M16.5,10 V24 M1.5,21 H32.5" stroke="#555" stroke-width="0.6"/>
<path d="M2,17 L4,15 L5,18 L7,15 L8,18 L10,15 L11,18 L13,16 L15,17 M17,17 H32" stroke="#60c060" stroke-width="0.6" fill="none"/>
</svg>
<svg class="a" style="left:991px;top:217px" width="35" height="35" viewBox="0 0 35 35">
<rect x="1.5" y="6" width="31" height="22" fill="#fff" stroke="#888" stroke-width="0.5"/>
<path d="M9,8 H25 M12,10 H22 M14,12 H20 M6,15 H28 M3,18 H14 M17,18 H31 M3,20 H14 M17,20 H31 M3,22 H14 M17,22 H31 M10,25.5 H24" stroke="#777" stroke-width="0.6"/>
</svg>
<div class="a btn" style="left:917px;top:256px;width:108px;height:30px"></div>
<svg class="a" style="left:918px;top:262px" width="27" height="17" viewBox="0 0 27 17">
<rect x="0" y="0" width="26" height="16" fill="#a8a8a8"/>
<rect x="7" y="2" width="19" height="14" fill="#000"/>
<path d="M7,6 H26 M7,9 H26 M7,12 H26" stroke="#304050" stroke-width="0.7"/>
</svg>
<div class="a" style="left:948px;top:263px;font-size:10.7px;color:#111;line-height:13px">Сводные граф.</div>
<div class="a" style="left:916px;top:333px;width:110px;height:365px;border:1px solid #000"></div>
<div class="a" style="left:916px;top:339px;width:110px;text-align:center;font-size:14px;color:#111;line-height:16px">ат</div>
<div class="a" style="left:921px;top:374px;width:100px;height:20px;border:1px solid #000"></div>
<div class="a" style="left:922px;top:358px;font-size:13px;font-weight:bold;color:#40ff40;line-height:15px">П</div>
<div class="a" style="left:924px;top:358px;width:100px;text-align:center;font-size:13.5px;font-weight:bold;color:#40ff40;line-height:15px">5.9</div>
<div class="a" style="left:922px;top:377.5px;font-size:13px;font-weight:bold;color:#00c000;line-height:15px">З</div>
<div class="a" style="left:924px;top:377.5px;width:100px;text-align:center;font-size:13.5px;font-weight:bold;color:#00c000;line-height:15px">5.8</div>
<div class="a" style="left:922px;top:396px;font-size:13px;font-weight:bold;color:#00ffff;line-height:15px">В</div>
<div class="a" style="left:924px;top:396px;width:100px;text-align:center;font-size:13.5px;font-weight:bold;color:#00ffff;line-height:15px">39.43</div>
<svg class="a" style="left:916px;top:412px" width="110" height="160" viewBox="916 412 110 160" font-family='"Liberation Sans",sans-serif'>
<rect x="928" y="512" width="6" height="55" fill="#00ffff"/>
<rect x="948" y="485" width="10.5" height="82" fill="#40ff40"/>
<rect x="987" y="485" width="9.5" height="82" fill="#00c000"/>
<path d="M935,427 V567 M958.8,427 V567 M986.6,427 V567" stroke="#000" stroke-width="1.4"/>
<path d="M958.8,427.5 H964 M958.8,455.5 H964 M958.8,483.5 H964 M958.8,511.5 H964 M958.8,539.5 H964 M958.8,567 H964" stroke="#000" stroke-width="1.2"/>
<text x="960.5" y="426" font-size="11" fill="#111">100%</text>
<text x="965" y="459.5" font-size="11" fill="#111">80</text>
<text x="965" y="487.5" font-size="11" fill="#111">60</text>
<text x="965" y="515.5" font-size="11" fill="#111">40</text>
<text x="965" y="543.5" font-size="11" fill="#111">20</text>
<text x="965" y="567" font-size="11" fill="#111">0</text>
</svg>
<div class="a btn" style="left:1002px;top:432px;width:20px;height:20px"></div>
<svg class="a" style="left:1001px;top:432px" width="22" height="20"><path d="M6,10 L11.5,5 L17,10 Z M6,16 L11.5,11 L17,16 Z" fill="#000"/></svg>
<div class="a btn" style="left:1002px;top:468px;width:20px;height:20px"></div>
<svg class="a" style="left:1001px;top:468px" width="22" height="20"><path d="M6,13 L11.5,7.5 L17,13 Z" fill="#000"/></svg>
<div class="a btn" style="left:1002px;top:503px;width:20px;height:20px"></div>
<svg class="a" style="left:1001px;top:503px" width="22" height="20"><path d="M6,8 L11.5,13.5 L17,8 Z" fill="#000"/></svg>
<div class="a btn" style="left:1002px;top:538px;width:20px;height:20px"></div>
<svg class="a" style="left:1001px;top:538px" width="22" height="20"><path d="M6,5 L11.5,10 L17,5 Z M6,11 L11.5,16 L17,11 Z" fill="#000"/></svg>
<div class="a btn" style="left:918px;top:569px;width:74px;height:19px;font-size:14px;color:#111;text-align:center;line-height:17px">Автомат</div>
<div class="a btn" style="left:994px;top:569px;width:28px;height:19px;font-size:12px;color:#111;text-align:center;line-height:17px;letter-spacing:-0.3px">ПИД</div>
<div class="a btn" style="left:918px;top:589px;width:33px;height:19px;font-size:12px;font-weight:bold;color:#111;text-align:center;line-height:17px">Авт.</div>
<div class="a btn" style="left:954px;top:589px;width:33px;height:19px;font-size:12px;font-weight:bold;color:#111;text-align:center;line-height:17px">Руч.</div>
<div class="a" style="left:916px;top:622px;width:110px;text-align:center;font-size:16px;font-weight:bold;color:#fff;line-height:18px">РС КРД1</div>
<div class="a btn" style="left:915px;top:701px;width:116px;height:20px;border-color:#8e8a86"></div>
<svg class="a" style="left:919px;top:702px" width="18" height="18"><circle cx="8.5" cy="8.5" r="6.5" fill="#fff" stroke="#555" stroke-width="1.5"/><path d="M6.5,5 L11.5,8.5 L6.5,12 Z" fill="#222"/></svg>
<div class="a" style="left:939px;top:703px;font-size:14px;color:#111;line-height:16px;letter-spacing:0.3px">Играть демо</div>
<svg class="a" style="left:812px;top:730px" width="117" height="33" viewBox="812 730 117 33">
<defs><linearGradient id="prg" x1="0" y1="0" x2="0" y2="1"><stop offset="0" stop-color="#f0f0f0"/><stop offset="1" stop-color="#a8a8a8"/></linearGradient></defs>
<rect x="826.5" y="737.5" width="8" height="8" fill="#fafafa" stroke="#c8c8c8" stroke-width="0.6"/>
<rect x="822" y="744" width="16" height="7.5" rx="2" fill="url(#prg)" stroke="#9a9a9a" stroke-width="0.6"/>
<rect x="823" y="744.5" width="14" height="2.2" fill="#2a90f0"/>
<rect x="825" y="750" width="10" height="4" fill="#fcfcfc" stroke="#b0b0b0" stroke-width="0.5"/>
<path d="M844,743 H853 L848.5,748 Z" fill="#000"/>
<rect x="861.5" y="738.5" width="14" height="15" fill="#c4c4c4" stroke="#555" stroke-width="0.6"/>
<path d="M862,741.5 H875 M862,744 H875 M866,738.5 V753.5 M870,738.5 V745" stroke="#fff" stroke-width="0.7"/>
<path d="M868.5,743 L877,748 L868.5,752 Z" fill="#f8e820" stroke="#404040" stroke-width="0.6"/>
<path d="M872,753.5 L876,749 L876,753.5 Z" fill="#222"/>
<path d="M883,743 H892 L887.5,748 Z" fill="#000"/>
<path d="M896,736 V757" stroke="#fff" stroke-width="1.2"/>
</svg>
<svg class="a" style="left:1022px;top:749px" width="14" height="14"><path d="M13,1 L1,13 M13,5 L5,13 M13,9 L9,13" stroke="#8a8682" stroke-width="1.2"/><path d="M13,2.5 L2.5,13 M13,6.5 L6.5,13 M13,10.5 L10.5,13" stroke="#fff" stroke-width="0.8"/></svg>

</body></html>
